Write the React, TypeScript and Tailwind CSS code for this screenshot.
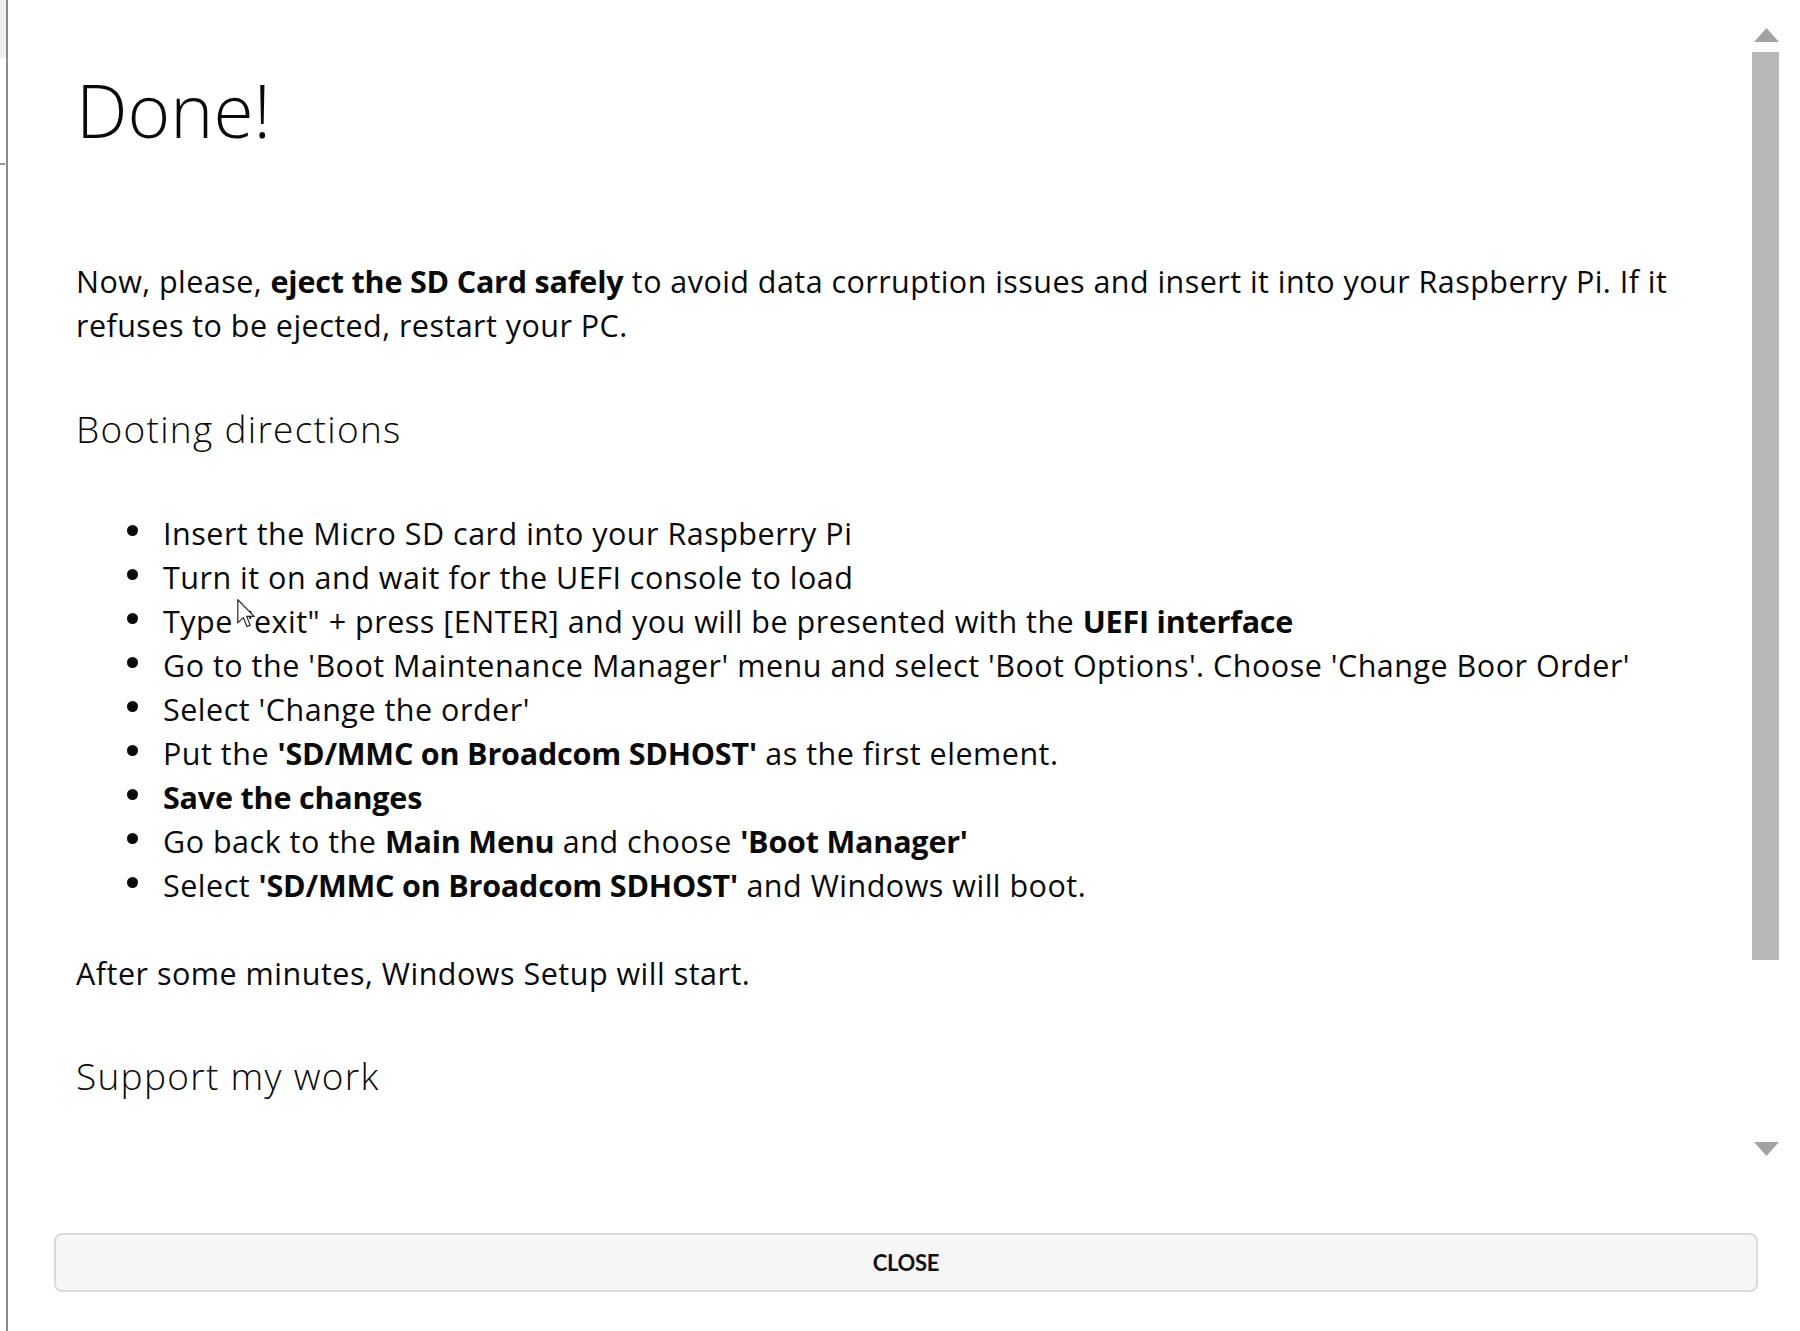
import React from "react";

const B = ({ children }: { children: React.ReactNode }) => (
  <b className="font-bold tracking-[-0.2px]">{children}</b>
);

const bullets: React.ReactNode[] = [
  <>Insert the Micro SD card into your Raspberry Pi</>,
  <>Turn it on and wait for the UEFI console to load</>,
  <>
    Type "exit" + press [ENTER] and you will be presented with the <B>UEFI interface</B>
  </>,
  <>Go to the 'Boot Maintenance Manager' menu and select 'Boot Options'. Choose 'Change Boor Order'</>,
  <>Select 'Change the order'</>,
  <>
    Put the <B>'SD/MMC on Broadcom SDHOST'</B> as the first element.
  </>,
  <>
    <B>Save the changes</B>
  </>,
  <>
    Go back to the <B>Main Menu</B> and choose <B>'Boot Manager'</B>
  </>,
  <>
    Select <B>'SD/MMC on Broadcom SDHOST'</B> and Windows will boot.
  </>,
];

export default function App() {
  return (
    <div className="relative flex h-[1331px] w-[1800px] overflow-hidden bg-white font-['Open_Sans','Noto_Sans',sans-serif] text-[#0a0a0a]">
      {/* left window edge */}
      <div className="flex w-[6px] flex-col">
        <div className="h-[58px] bg-[#efefef]" />
        <div className="mt-[105px] h-[2px] w-[5px] bg-[#9a9a9a]" />
      </div>
      <div className="w-[2px] bg-[#8c8c8c]" />

      <div className="flex flex-1 flex-col">
        {/* scrollable region */}
        <div className="flex h-[1190px]">
          <div className="flex-1 overflow-hidden pl-[68px] pr-[52px] pt-[66px]">
            <h1 className="text-[73px] font-light leading-[1.2]">Done!</h1>

            <p className="mt-[105px] text-[30.5px] leading-[44px] tracking-[0.45px]">
              Now, please, <B>eject the SD Card safely</B> to avoid data corruption issues and insert it into your Raspberry
              Pi. If it refuses to be ejected, restart your PC.
            </p>

            <h2 className="mt-[60px] text-[37px] font-light leading-[1.2] tracking-[1.3px]">Booting directions</h2>

            <ul className="mt-[60px] text-[30.5px] leading-[44px] tracking-[0.5px]">
              {bullets.map((b, i) => (
                <li key={i} className="flex">
                  <span className="flex h-[44px] w-[87px] shrink-0 items-center pb-[4px] pl-[51px]">
                    <span className="h-[11px] w-[11px] rounded-full bg-[#0a0a0a]" />
                  </span>
                  <span>{b}</span>
                </li>
              ))}
            </ul>

            <p className="mt-[44px] text-[30.5px] leading-[44px] tracking-[0.5px]">
              After some minutes, Windows Setup will start.
            </p>

            <h2 className="mt-[59px] text-[37px] font-light leading-[1.2] tracking-[1.3px]">Support my work</h2>
          </div>

          {/* scrollbar */}
          <div className="mr-[21px] flex w-[27px] flex-col items-center pb-[34px] pt-[28px]">
            <svg width="25" height="14" viewBox="0 0 25 14" className="ml-[2px]">
              <polygon points="12.5,0 25,14 0,14" fill="#a3a3a3" />
            </svg>
            <div className="mt-[10px] h-[908px] w-[27px] bg-[#b8b8b8]" />
            <div className="flex-1" />
            <svg width="25" height="14" viewBox="0 0 25 14" className="ml-[2px]">
              <polygon points="0,0 25,0 12.5,14" fill="#a3a3a3" />
            </svg>
          </div>
        </div>

        {/* footer button */}
        <div className="ml-[46px] mr-[42px] mt-[43px]">
          <button className="flex h-[59px] w-full items-center justify-center rounded-[8px] border-2 border-[#dadada] bg-[#f6f6f6] font-['Lato','Open_Sans',sans-serif] text-[22px] font-bold tracking-[-0.3px] text-[#111]">
            CLOSE
          </button>
        </div>
      </div>

      {/* mouse cursor overlay */}
      <svg
        className="absolute left-[237px] top-[599px]"
        width="19"
        height="29"
        viewBox="0 0 13 20"
      >
        <path d="M0.5 0.5 L0.5 16.5 L4.3 12.8 L6.8 19 L9 18 L6.6 12 L11.8 12 Z" fill="#ffffff" stroke="#222" strokeWidth="0.8" strokeLinejoin="round" />
      </svg>
    </div>
  );
}
